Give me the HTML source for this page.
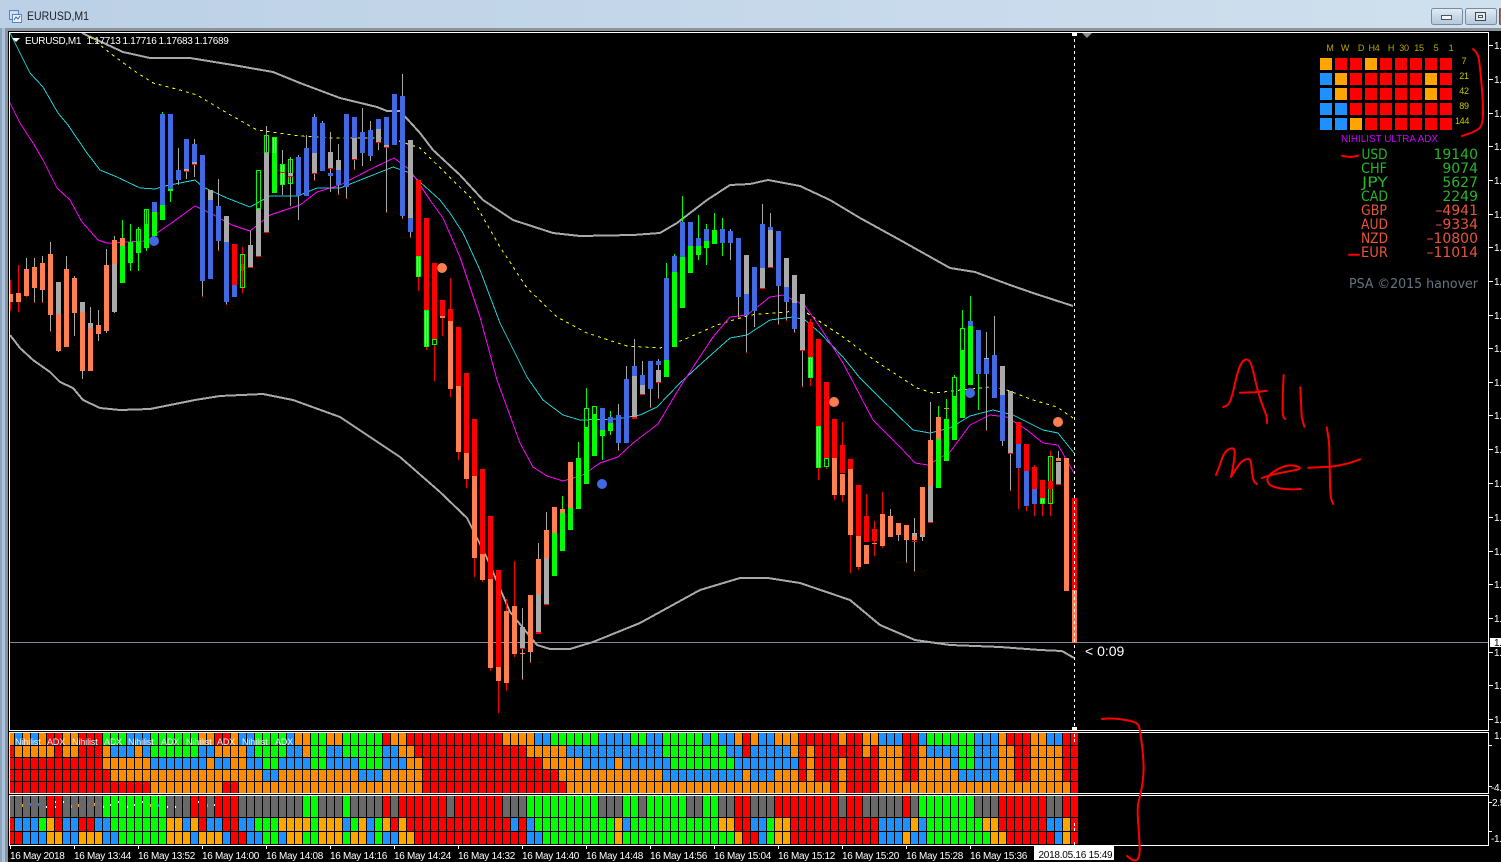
<!DOCTYPE html>
<html><head><meta charset="utf-8"><title>EURUSD,M1</title>
<style>
html,body{margin:0;padding:0;background:#000;width:1501px;height:862px;overflow:hidden}
svg{display:block;position:absolute;left:0;top:0}
text{font-family:"Liberation Sans",sans-serif}
.a{font-size:10px;letter-spacing:-.3px;fill:#fff}
.h{font-size:9px;fill:#b9a800;text-anchor:middle;letter-spacing:-.3px}
.c{font-family:"DejaVu Sans",sans-serif;font-size:14px}
.n{font-family:"DejaVu Sans",sans-serif;font-size:14px;text-anchor:end}
.g{fill:#2ab52a}.r{fill:#e8563a}
.t{font-size:9px;fill:#eef4ff;letter-spacing:-.1px}
.p{fill:none;stroke-linejoin:round}
</style></head><body>
<svg width="1501" height="862" viewBox="0 0 1501 862" xmlns="http://www.w3.org/2000/svg">
<defs>
<linearGradient id="tb" x1="0" y1="0" x2="1" y2="0"><stop offset="0" stop-color="#bcd0e6"/><stop offset="1" stop-color="#cfe0ee"/></linearGradient>
<linearGradient id="bt" x1="0" y1="0" x2="0" y2="1"><stop offset="0" stop-color="#e4edf5"/><stop offset=".5" stop-color="#c9d8e6"/><stop offset="1" stop-color="#b4c8da"/></linearGradient>
<clipPath id="cl"><rect x="10" y="33" width="1078" height="697"/></clipPath>
</defs>
<rect width="1501" height="862" fill="#000"/>
<!-- window chrome -->
<rect width="1501" height="28" fill="url(#tb)"/>
<rect x="0" y="28" width="7" height="834" fill="#a9c3df"/>
<rect x="0" y="28" width="2" height="834" fill="#8fa3b8"/>
<rect x="5" y="28" width="1496" height="3" fill="#8b939b"/>
<rect x="5" y="28" width="3" height="834" fill="#8b939b"/>
<!-- title icon -->
<rect x="9.5" y="10.5" width="9" height="9" fill="#cfe0f4" stroke="#5b84c4"/>
<rect x="12.5" y="14.5" width="9" height="8" fill="#eaf2fb" stroke="#5b84c4"/>
<path d="M14 20l2-3 2 2 2-3" fill="none" stroke="#3a66b0"/>
<text x="27" y="20" textLength="62" lengthAdjust="spacingAndGlyphs" style="font-size:12px;fill:#1a1f2a">EURUSD,M1</text>
<!-- buttons -->
<rect x="1431.5" y="8.5" width="31" height="16" rx="2" fill="url(#bt)" stroke="#7b8b9c"/>
<rect x="1441.5" y="15.5" width="10" height="4" fill="#f4f7fa" stroke="#4a5560"/>
<rect x="1465.5" y="8.5" width="31" height="16" rx="2" fill="url(#bt)" stroke="#7b8b9c"/>
<rect x="1475.5" y="12.5" width="10" height="8" fill="#dfe7ef" stroke="#3d4853"/>
<rect x="1478.5" y="15.5" width="4" height="2" fill="#f8fafc" stroke="#4a5560"/>
<rect x="1499.5" y="8.5" width="4" height="16" rx="1" fill="#c8584f" stroke="#7b4a48"/>

<g shape-rendering="crispEdges">
<!-- price line -->
<path d="M10 642.5H1488" stroke="#7d8c9a" fill="none"/>
<!-- indicator lines -->
<g clip-path="url(#cl)">
<polyline class="p" stroke="#a9a9a9" stroke-width="2" points="82,33 123,52 150,58 190,58 233,65 273,72 300,83 340,98 377,107 387,111 400,111 420,133 433,150 460,175 483,200 513,220 553,233 580,236 633,235 660,233 677,223 707,200 730,185 750,184 768,180 800,186 830,200 860,218 900,240 950,268 975,272 1010,285 1033,293 1073,306"/>
<polyline class="p" stroke="#a9a9a9" stroke-width="2" points="10,335 20,348 33,360 50,372 60,382 73,388 83,400 100,408 120,410 150,409 195,400 220,396 263,394 293,400 340,417 400,457 440,492 467,518 487,558 510,612 537,645 550,649 570,649 593,642 640,623 700,590 740,578 768,578 800,583 850,600 880,625 915,640 950,645 1000,647 1040,650 1062,651 1074,658"/>
<polyline class="p" stroke="#ffff00" stroke-dasharray="3 4" points="90,37 110,53 133,70 153,83 180,90 197,95 227,113 257,130 300,136 333,138 390,138 420,148 473,200 500,247 527,288 557,317 587,333 627,346 660,348 683,340 717,325 750,315 797,311 807,313 843,337 877,362 917,388 933,393 990,387 1007,390 1033,400 1057,407 1073,418"/>
<polyline class="p" stroke="#1fd0d6" points="10,33 30,73 43,87 58,113 68,125 87,153 100,170 117,177 140,188 155,189 165,186 180,183 195,180 203,187 227,198 250,207 270,196 298,196 317,188 340,188 373,175 393,167 410,173 440,200 450,213 463,233 480,270 500,323 527,377 543,400 563,415 580,420 617,419 640,415 657,407 680,383 703,362 730,338 747,335 770,320 793,317 805,320 820,333 843,357 860,378 880,398 913,430 930,433 950,428 970,416 993,410 1013,415 1043,430 1058,433 1074,453"/>
<polyline class="p" stroke="#ff00ff" points="10,103 20,123 33,143 43,160 57,188 70,200 82,222 98,240 107,243 147,241 157,233 173,222 195,206 210,213 232,225 250,231 270,215 300,205 317,192 340,185 373,168 394,158 410,170 430,200 443,218 460,257 480,317 497,380 520,443 533,467 547,476 563,481 583,475 600,463 618,457 633,443 658,424 680,387 713,337 730,317 747,315 770,297 783,295 798,302 805,306 820,327 843,363 873,420 900,447 915,463 928,465 950,452 970,425 990,415 1007,417 1027,430 1043,443 1058,445 1074,473"/>
<!-- wicks -->
<path fill="none" stroke="#a9a9a9" d="M26.5 258V297M34.5 258V303M42.5 256V303M50.5 242V332M58.5 282V352M66.5 256V347M74.5 276V336M82.5 302V379M90.5 307V371M98.5 310V341M106.5 249V333M114.5 236V313M178.5 148V185M186.5 139V179M194.5 139V177M202.5 281V297M218.5 179V251M226.5 302V305M250.5 231V268M266.5 126V232M282.5 150V195M290.5 157V206M298.5 155V220M306.5 135V196M314.5 114V181M322.5 121V171M330.5 132V192M338.5 144V195M346.5 114V199M354.5 159V170M362.5 108V166M370.5 121V161M378.5 142V150M386.5 145V213M402.5 74V219M410.5 232V238M522.5 608V680M530.5 652V663M538.5 543V559M546.5 512V530M618.5 404V451M626.5 366V379M634.5 339V419M642.5 361V395M650.5 389V408M658.5 359V399M730.5 229V260M738.5 297V318M746.5 315V353M754.5 311V327M762.5 204V224M770.5 213V227M778.5 286V325M786.5 302V321M794.5 329V333M802.5 350V387M890.5 509V516M898.5 535V541M906.5 540V563M914.5 518V572M922.5 535V541M930.5 402V440M986.5 332V431M994.5 316V355M1002.5 441V446M1010.5 453V491M1058.5 451V458"/>
<path fill="none" stroke="#ff0000" d="M10.5 280V311M18.5 265V312M242.5 247V293M418.5 277V291M426.5 347V350M434.5 344V381M442.5 318V336M450.5 278V309M450.5 389V397M458.5 452V460M466.5 479V488M474.5 558V577M482.5 580V582M490.5 668V671M498.5 681V713M506.5 599V611M506.5 683V691M514.5 561V606M514.5 654V657M810.5 319V322M810.5 378V386M818.5 468V480M826.5 466V469M834.5 495V500M842.5 422V445M842.5 495V502M850.5 535V573M858.5 567V570M866.5 494V516M874.5 521V556M882.5 492V514M882.5 546V548M1018.5 468V509M1026.5 506V511M1034.5 465V516M1042.5 504V516M1050.5 451V516M26.5 296V297M34.5 302V303M42.5 302V303M50.5 331V332M202.5 296V297M226.5 304V305M218.5 250V251M314.5 180V181M338.5 194V195M346.5 198V199M354.5 169V170M386.5 212V213M402.5 218V219M410.5 237V238M522.5 679V680M530.5 662V663M618.5 450V451M650.5 407V408M658.5 398V399M738.5 317V318M746.5 352V353M778.5 324V325M786.5 320V321M794.5 332V333M802.5 386V387M906.5 562V563M914.5 571V572M986.5 430V431M1010.5 490V491"/>
<path fill="none" stroke="#00ff00" d="M122.5 220V238M130.5 224V271M138.5 227V271M146.5 209V251M162.5 112V114M170.5 191V202M562.5 496V509M578.5 442V458M586.5 388V408M602.5 436V460M610.5 411V435M666.5 263V278M674.5 254V256M682.5 196V222M698.5 215V260M706.5 224V265M714.5 213V244M722.5 218V256M938.5 406V417M946.5 399V419M954.5 375V377M962.5 310V328M970.5 296V321M978.5 374V410"/>
<!-- bodies -->
<g fill="none" stroke-width="5">
<path stroke="#ff7f50" d="M10.5 294V302M18.5 293V302M26.5 269V296M34.5 267V288M42.5 263V290M50.5 254V315M58.5 314V351M66.5 269V347M74.5 278V313M82.5 312V371M90.5 328V371M98.5 325V334M106.5 265V331M114.5 240V264M122.5 238V246M442.5 316V318M450.5 321V389M458.5 386V452M466.5 453V479M474.5 476V558M482.5 554V580M490.5 579V668M498.5 667V681M506.5 611V683M514.5 606V654M530.5 595V652M538.5 559V594M546.5 530V558M554.5 507V533M562.5 509V513M570.5 462V508M522.5 653V654M834.5 458V495M842.5 474V495M850.5 469V535M858.5 536V567M866.5 545V564M874.5 543V544M882.5 514V546M890.5 516V537M898.5 523V535M906.5 525V540M914.5 536V540M922.5 487V535M930.5 440V486M938.5 417V439M946.5 408V409M1010.5 444V445M1058.5 458V461M1066.5 458V591M1074.5 590V643"/>
<path stroke="#a9a9a9" d="M58.5 282V314M82.5 302V312M90.5 323V328M114.5 264V312M186.5 169V171M194.5 162V164M210.5 190V200M226.5 216V242M250.5 245V267M258.5 208V256M266.5 152V232M290.5 173V176M314.5 153V173M330.5 152V168M338.5 160V170M354.5 138V159M378.5 129V142M386.5 145V147M410.5 140V218M522.5 627V648M538.5 594V632M546.5 558V604M634.5 376V417M642.5 385V394M658.5 370V382M746.5 255V294M762.5 268V288M770.5 230V267M786.5 258V287M794.5 275V303M802.5 294V350M914.5 533V536M922.5 535V537M930.5 486V522M986.5 358V359M1002.5 366V395M1010.5 391V453M1058.5 462V484"/>
<path stroke="#4169e1" d="M154.5 202V212M162.5 114V205M170.5 114V189M178.5 170V180M186.5 139V169M194.5 144V162M202.5 155V281M210.5 200V279M218.5 206V241M226.5 242V302M234.5 285V297M298.5 157V196M306.5 148V196M314.5 117V153M322.5 123V171M330.5 173V176M338.5 170V185M346.5 114V187M354.5 117V138M362.5 132V153M370.5 130V156M378.5 119V129M386.5 117V145M394.5 94V145M402.5 96V216M410.5 218V232M602.5 408V430M610.5 417V423M618.5 415V443M626.5 379V443M634.5 366V376M642.5 375V385M650.5 361V389M658.5 361V365M666.5 278V360M674.5 256V272M682.5 222V257M690.5 222V246M698.5 238V246M706.5 229V241M722.5 229V243M730.5 231V243M738.5 238V297M746.5 294V315M754.5 267V311M762.5 224V268M770.5 227V230M778.5 231V286M786.5 287V302M794.5 303V329M970.5 321V326M978.5 330V374M986.5 359V374M994.5 355V398M1002.5 395V441M1018.5 444V468M1026.5 471V506M1034.5 489V504"/>
<path stroke="#00ff00" d="M122.5 246V283M130.5 242V263M138.5 242V253M146.5 224V248M154.5 212V236M162.5 205V220M170.5 189V191M274.5 137V193M282.5 164V185M418.5 256V277M426.5 310V347M810.5 357V378M818.5 426V468M1042.5 498V504M554.5 533V576M562.5 513V551M570.5 508V530M578.5 458V509M586.5 427V484M594.5 415V456M602.5 430V436M610.5 423V431M666.5 360V377M674.5 272V347M682.5 257V308M690.5 246V273M698.5 246V255M706.5 241V248M714.5 230V244M938.5 439V488M946.5 419V461M954.5 396V440M962.5 350V418M970.5 326V385"/>
<path stroke="#ff0000" d="M234.5 244V285M242.5 264V271M186.5 171V172M194.5 164V165M250.5 267V268M258.5 256V257M266.5 232V233M314.5 173V174M330.5 168V169M354.5 159V160M378.5 142V143M386.5 147V148M418.5 180V256M426.5 218V310M434.5 263V339M442.5 300V316M450.5 309V321M458.5 327V386M466.5 373V453M474.5 419V476M482.5 469V554M490.5 516V579M498.5 570V667M522.5 648V649M538.5 632V634M546.5 604V605M634.5 417V419M642.5 394V395M658.5 382V383M762.5 288V289M770.5 267V268M802.5 350V351M810.5 322V357M818.5 339V426M826.5 382V458M834.5 419V458M842.5 445V473M850.5 459V469M858.5 485V536M866.5 516V542M874.5 529V541M914.5 541V542M930.5 522V523M1010.5 453V454M1018.5 422V444M1026.5 444V471M1034.5 467V489M1042.5 480V498M1050.5 481V489M1058.5 484V485M1074.5 498V590"/>
</g>
<!-- white stripes -->
<path fill="none" stroke="#fff" d="M273.5 138V153M275.5 138V153M281.5 165V184M283.5 165V184M417.5 257V276M419.5 257V276M425.5 311V346M427.5 311V346M809.5 358V377M811.5 358V377M817.5 427V467M819.5 427V467M1041.5 499V503M1043.5 499V503"/>
<path fill="none" stroke="#ff0000" stroke-width="5" d="M282.5 172V173"/>
<!-- outline candles -->
<path fill="none" stroke="#00ff00" d="M136.5 229.5h4v13h-4zM144.5 209.5h4v15h-4zM240.5 254.5h4v33h-4zM256.5 170.5h4v38h-4zM264.5 135.5h4v17h-4zM288.5 159.5h4v24h-4zM432.5 339.5h4v5h-4zM584.5 408.5h4v19h-4zM592.5 406.5h4v8h-4zM824.5 458.5h4v8h-4zM952.5 377.5h4v19h-4zM960.5 328.5h4v22h-4zM1048.5 456.5h4v47h-4z"/>
<path fill="none" stroke="#a9a9a9" stroke-width="5" d="M290.5 173V176"/>
<path fill="none" stroke="#ff0000" stroke-width="5" d="M290.5 176V177M1050.5 481V489"/>
</g>
<!-- dashed cursor -->
<path d="M1074.5 33V730" stroke="#fff" stroke-dasharray="3 3" fill="none"/>
<rect x="1072" y="33" width="5" height="3" fill="#fff"/>
<rect x="1072" y="727" width="5" height="3" fill="#fff"/>
<!-- indicator grid panel 2 -->
<g fill="none" stroke-width="12">
<path stroke="#ff0000" d="M46 739H62M78 739H102M214 739H230M382 739H390M406 739H502M742 739H750M798 739H838M846 739H862M902 739H918M1006 739H1030M1062 739H1078"/>
<path stroke="#ff8c00" d="M10 739H14M22 739H30M38 739H46M62 739H78M198 739H214M230 739H238M294 739H310M326 739H342M390 739H406M502 739H534M734 739H742M750 739H758M774 739H798M838 739H846M862 739H878M998 739H1006M1030 739H1046"/>
<path stroke="#1e90ff" d="M14 739H22M30 739H38M126 739H150M238 739H254M286 739H294M534 739H550M598 739H630M646 739H662M702 739H710M718 739H734M758 739H774M878 739H902M918 739H926M974 739H998M1046 739H1062"/>
<path stroke="#00ff00" d="M102 739H126M150 739H198M254 739H286M310 739H326M342 739H382M550 739H598M630 739H646M662 739H702M710 739H718M926 739H974"/>
</g>
<g fill="none" stroke-width="11">
<path stroke="#ff0000" d="M10 751.5H14M54 751.5H62M78 751.5H102M414 751.5H526M742 751.5H750M798 751.5H806M814 751.5H862M870 751.5H878M902 751.5H918M1014 751.5H1030M1062 751.5H1078"/>
<path stroke="#ff8c00" d="M14 751.5H54M62 751.5H78M102 751.5H110M134 751.5H142M214 751.5H246M302 751.5H310M398 751.5H414M526 751.5H566M790 751.5H798M806 751.5H814M862 751.5H870M878 751.5H902M918 751.5H926M998 751.5H1014M1030 751.5H1062"/>
<path stroke="#1e90ff" d="M110 751.5H134M142 751.5H150M198 751.5H214M246 751.5H254M286 751.5H302M326 751.5H342M382 751.5H398M566 751.5H662M726 751.5H742M750 751.5H790M926 751.5H958M974 751.5H998"/>
<path stroke="#00ff00" d="M150 751.5H198M254 751.5H286M310 751.5H326M342 751.5H382M662 751.5H726M958 751.5H974"/>

<path stroke="#ff0000" d="M10 763.5H102M422 763.5H542M798 763.5H806M814 763.5H838M846 763.5H878M902 763.5H918M1014 763.5H1030M1062 763.5H1078"/>
<path stroke="#ff8c00" d="M102 763.5H150M206 763.5H214M230 763.5H246M406 763.5H422M542 763.5H582M614 763.5H622M806 763.5H814M838 763.5H846M878 763.5H902M918 763.5H950M998 763.5H1014M1030 763.5H1062"/>
<path stroke="#1e90ff" d="M150 763.5H206M214 763.5H230M246 763.5H262M278 763.5H310M326 763.5H358M382 763.5H406M582 763.5H614M622 763.5H670M734 763.5H798M950 763.5H958M974 763.5H998"/>
<path stroke="#00ff00" d="M262 763.5H278M310 763.5H326M358 763.5H382M670 763.5H734M958 763.5H974"/>

<path stroke="#ff0000" d="M10 775.5H110M422 775.5H558M798 775.5H806M814 775.5H838M846 775.5H878M902 775.5H918M1014 775.5H1030M1062 775.5H1078"/>
<path stroke="#ff8c00" d="M110 775.5H262M278 775.5H358M382 775.5H422M558 775.5H662M742 775.5H750M774 775.5H798M806 775.5H814M838 775.5H846M878 775.5H902M918 775.5H958M998 775.5H1014M1030 775.5H1062"/>
<path stroke="#1e90ff" d="M262 775.5H278M358 775.5H382M662 775.5H742M750 775.5H774M958 775.5H998"/>

<path stroke="#ff0000" d="M10 787.5H150M222 787.5H238M422 787.5H566M830 787.5H838M846 787.5H878M1070 787.5H1078"/>
<path stroke="#ff8c00" d="M150 787.5H222M238 787.5H422M566 787.5H830M838 787.5H846M878 787.5H1070"/>
</g>
<!-- panel 3 -->
<g fill="none" stroke-width="21">
<path stroke="#696969" d="M10 806.5H46M62 806.5H102M166 806.5H190M206 806.5H214M238 806.5H302M318 806.5H342M350 806.5H382M390 806.5H398M446 806.5H454M502 806.5H526M598 806.5H622M638 806.5H646M686 806.5H702M718 806.5H734M750 806.5H774M838 806.5H846M862 806.5H902M910 806.5H918M974 806.5H998M1046 806.5H1062"/>
<path stroke="#ff0000" d="M46 806.5H62M190 806.5H206M214 806.5H238M382 806.5H390M398 806.5H446M454 806.5H502M734 806.5H750M774 806.5H838M846 806.5H862M902 806.5H910M998 806.5H1046M1062 806.5H1078"/>
<path stroke="#00ff00" d="M102 806.5H166M302 806.5H318M342 806.5H350M526 806.5H598M622 806.5H638M646 806.5H686M702 806.5H718M918 806.5H974"/>
</g>
<g fill="none" stroke-width="13">
<path stroke="#ff0000" d="M10 824.5H14M54 824.5H62M78 824.5H94M198 824.5H206M222 824.5H238M390 824.5H398M406 824.5H510M518 824.5H526M734 824.5H750M790 824.5H878M998 824.5H1046M1070 824.5H1078"/>
<path stroke="#ffa500" d="M46 824.5H54M166 824.5H182M190 824.5H198M278 824.5H310M318 824.5H342M358 824.5H366M382 824.5H390M398 824.5H406M614 824.5H622M718 824.5H734M774 824.5H790M910 824.5H918M982 824.5H998M1062 824.5H1070"/>
<path stroke="#1e90ff" d="M14 824.5H38M62 824.5H78M94 824.5H110M182 824.5H190M206 824.5H222M238 824.5H254M342 824.5H350M366 824.5H374M510 824.5H518M526 824.5H534M622 824.5H630M750 824.5H766M878 824.5H910M918 824.5H926M1046 824.5H1062"/>
<path stroke="#00ff00" d="M38 824.5H46M110 824.5H166M254 824.5H278M310 824.5H318M350 824.5H358M374 824.5H382M534 824.5H614M630 824.5H718M766 824.5H774M926 824.5H982"/>
</g>
<g fill="none" stroke-width="12">
<path stroke="#ff0000" d="M10 838H22M230 838H246M414 838H526M742 838H758M790 838H878M1006 838H1054M1070 838H1078"/>
<path stroke="#ffa500" d="M46 838H62M78 838H102M166 838H190M198 838H222M286 838H302M318 838H342M350 838H366M398 838H414M614 838H622M734 838H742M774 838H790M902 838H910M990 838H1006M1062 838H1070"/>
<path stroke="#1e90ff" d="M22 838H46M62 838H78M102 838H118M190 838H198M222 838H230M246 838H262M278 838H286M366 838H374M382 838H398M526 838H542M758 838H766M878 838H902M910 838H926M1054 838H1062"/>
<path stroke="#00ff00" d="M118 838H166M262 838H278M302 838H318M342 838H350M374 838H382M542 838H614M622 838H734M766 838H774M926 838H990"/>
</g>
<!-- grid lines -->
<path stroke="#000" fill="none" d="M14.5 733
v112m8-112v112m8-112v112m8-112v112m8-112v112m8-112v112m8-112v112m8-112v112m8-112v112m8-112v112m8-112
v112m8-112v112m8-112v112m8-112v112m8-112v112m8-112v112m8-112v112m8-112v112m8-112v112m8-112v112m8-112
v112m8-112v112m8-112v112m8-112v112m8-112v112m8-112v112m8-112v112m8-112v112m8-112v112m8-112v112m8-112
v112m8-112v112m8-112v112m8-112v112m8-112v112m8-112v112m8-112v112m8-112v112m8-112v112m8-112v112m8-112
v112m8-112v112m8-112v112m8-112v112m8-112v112m8-112v112m8-112v112m8-112v112m8-112v112m8-112v112m8-112
v112m8-112v112m8-112v112m8-112v112m8-112v112m8-112v112m8-112v112m8-112v112m8-112v112m8-112v112m8-112
v112m8-112v112m8-112v112m8-112v112m8-112v112m8-112v112m8-112v112m8-112v112m8-112v112m8-112v112m8-112
v112m8-112v112m8-112v112m8-112v112m8-112v112m8-112v112m8-112v112m8-112v112m8-112v112m8-112v112m8-112
v112m8-112v112m8-112v112m8-112v112m8-112v112m8-112v112m8-112v112m8-112v112m8-112v112m8-112v112m8-112
v112m8-112v112m8-112v112m8-112v112m8-112v112m8-112v112m8-112v112m8-112v112m8-112v112m8-112v112m8-112
v112m8-112v112m8-112v112m8-112v112m8-112v112m8-112v112m8-112v112m8-112v112m8-112v112m8-112v112m8-112
v112m8-112v112m8-112v112m8-112v112m8-112v112m8-112v112m8-112v112m8-112v112m8-112v112m8-112v112m8-112
v112m8-112v112m8-112v112m8-112v112m8-112v112m8-112v112m8-112v112m8-112v112m8-112v112m8-112v112m8-112
v112m8-112v112m8-112v112"/>
<path stroke="#000" fill="none" d="M10 745.5H1078M10 757.5H1078M10 769.5H1078M10 781.5H1078M10 817.5H1078M10 831.5H1078"/>
<path d="M1074.5 734V737M1074.5 739V742M1074.5 823V826M1074.5 828V831M1074.5 842V845" stroke="#fff" fill="none"/>
<!-- marks in panel 3 -->
<path fill="none" stroke="#ff9a30" d="M22.5 804v3M71.5 805v3M78.5 804v3M94.5 803v3M150.5 804v3M207.5 804v3"/>
<path fill="none" stroke="#3a7fd0" d="M30.5 803v3M38.5 803v3M87.5 804v3M158.5 804v3M183.5 804v3"/>
<path fill="none" stroke="#fff" d="M46.5 806v2M55.5 801v2M55.5 806v2M63.5 801v2M103.5 806v2M110.5 804v2M118.5 801v2M127.5 806v2M134.5 804v2M142.5 801v2M167.5 806v2M175.5 806v2M198.5 801v2M214.5 804v2"/>
<!-- frames -->
<g fill="none" stroke="#fff">
<rect x="9.5" y="32.5" width="1479" height="698"/>
<rect x="9.5" y="732.5" width="1479" height="61"/>
<rect x="9.5" y="795.5" width="1479" height="50"/>
<!-- ticks -->
<path d="M1489 45.5h4M1489 79.5h4M1489 113.5h4M1489 146.5h4M1489 180.5h4M1489 214.5h4M1489 247.5h4M1489 281.5h4M1489 315.5h4M1489 348.5h4M1489 382.5h4M1489 415.5h4M1489 449.5h4M1489 483.5h4M1489 517.5h4M1489 551.5h4M1489 584.5h4M1489 618.5h4M1489 652.5h4M1489 685.5h4M1489 719.5h4M1489 745.5h3M1489 786.5h3M1489 802.5h3M1489 831.5h3"/>
<path d="M10.5 846v3M74.5 846v3M138.5 846v3M202.5 846v3M266.5 846v3M330.5 846v3M394.5 846v3M458.5 846v3M522.5 846v3M586.5 846v3M650.5 846v3M714.5 846v3M778.5 846v3M842.5 846v3M906.5 846v3M970.5 846v3M1034.5 846v3"/>
</g>
<!-- matrix -->
<path fill="#ffa500" d="M1320 58h12v12h-12zM1365 58h12v12h-12zM1335 73h12v12h-12zM1425 73h12v12h-12zM1335 88h12v12h-12zM1425 88h12v12h-12zM1350 118h12v12h-12z"/>
<path fill="#1e90ff" d="M1320 73h12v12h-12zM1320 88h12v12h-12zM1320 103h12v12h-12zM1335 103h12v12h-12zM1320 118h12v12h-12zM1335 118h12v12h-12z"/>
<path fill="#ff0000" d="M1335 58h12v12h-12zM1350 58h12v12h-12zM1380 58h12v12h-12zM1395 58h12v12h-12zM1410 58h12v12h-12zM1425 58h12v12h-12zM1440 58h12v12h-12zM1350 73h12v12h-12zM1365 73h12v12h-12zM1380 73h12v12h-12zM1395 73h12v12h-12zM1410 73h12v12h-12zM1440 73h12v12h-12zM1350 88h12v12h-12zM1365 88h12v12h-12zM1380 88h12v12h-12zM1395 88h12v12h-12zM1410 88h12v12h-12zM1440 88h12v12h-12zM1350 103h12v12h-12zM1365 103h12v12h-12zM1380 103h12v12h-12zM1395 103h12v12h-12zM1410 103h12v12h-12zM1425 103h12v12h-12zM1440 103h12v12h-12zM1365 118h12v12h-12zM1380 118h12v12h-12zM1395 118h12v12h-12zM1410 118h12v12h-12zM1425 118h12v12h-12zM1440 118h12v12h-12z"/>
</g>
<!-- dots -->
<circle cx="154" cy="241" r="5" fill="#4169e1"/>
<circle cx="442" cy="268" r="5" fill="#ff7f50"/>
<circle cx="602" cy="484" r="5" fill="#4169e1"/>
<circle cx="834" cy="402" r="5" fill="#ff7f50"/>
<circle cx="970" cy="393" r="5" fill="#4169e1"/>
<circle cx="1058" cy="422" r="5" fill="#ff7f50"/>
<!-- header -->
<path d="M12 38h8l-4 4z" fill="#fff"/>
<path d="M1082 33h10l-5 5z" fill="#8a8f94"/>
<text class="a" x="25" y="44">EURUSD,M1</text>
<text class="a" x="86.5" y="44">1.17713</text>
<text class="a" x="122.5" y="44">1.17716</text>
<text class="a" x="158.5" y="44">1.17683</text>
<text class="a" x="194.5" y="44">1.17689</text>
<!-- grid overlay text -->
<text class="t" x="15" y="745">Nihilist</text><text class="t" x="47" y="745">ADX</text>
<text class="t" x="72" y="745">Nihilist</text><text class="t" x="104" y="745">ADX</text>
<text class="t" x="128" y="745">Nihilist</text><text class="t" x="161" y="745">ADX</text>
<text class="t" x="186" y="745">Nihilist</text><text class="t" x="217" y="745">ADX</text>
<text class="t" x="242" y="745">Nihilist</text><text class="t" x="275" y="745">ADX</text>
<!-- time axis -->
<text class="a" x="10" y="859">16 May 2018</text>
<text class="a" x="74" y="859">16 May 13:44</text>
<text class="a" x="138" y="859">16 May 13:52</text>
<text class="a" x="202" y="859">16 May 14:00</text>
<text class="a" x="266" y="859">16 May 14:08</text>
<text class="a" x="330" y="859">16 May 14:16</text>
<text class="a" x="394" y="859">16 May 14:24</text>
<text class="a" x="458" y="859">16 May 14:32</text>
<text class="a" x="522" y="859">16 May 14:40</text>
<text class="a" x="586" y="859">16 May 14:48</text>
<text class="a" x="650" y="859">16 May 14:56</text>
<text class="a" x="714" y="859">16 May 15:04</text>
<text class="a" x="778" y="859">16 May 15:12</text>
<text class="a" x="842" y="859">16 May 15:20</text>
<text class="a" x="906" y="859">16 May 15:28</text>
<text class="a" x="970" y="859">16 May 15:36</text>
<rect x="1034" y="846" width="80" height="14" fill="#fff"/>
<text x="1038.5" y="858" style="font-size:10px;letter-spacing:-.25px;fill:#000">2018.05.16 15:49</text>
<!-- price axis -->
<g style="letter-spacing:-.6px">
<text class="a" x="1494" y="49">1.18100</text>
<text class="a" x="1494" y="83">1.18080</text>
<text class="a" x="1494" y="117">1.18060</text>
<text class="a" x="1494" y="150">1.18040</text>
<text class="a" x="1494" y="184">1.18020</text>
<text class="a" x="1494" y="218">1.18000</text>
<text class="a" x="1494" y="251">1.17980</text>
<text class="a" x="1494" y="285">1.17960</text>
<text class="a" x="1494" y="319">1.17940</text>
<text class="a" x="1494" y="352">1.17920</text>
<text class="a" x="1494" y="386">1.17900</text>
<text class="a" x="1494" y="419">1.17880</text>
<text class="a" x="1494" y="453">1.17860</text>
<text class="a" x="1494" y="487">1.17840</text>
<text class="a" x="1494" y="521">1.17820</text>
<text class="a" x="1494" y="555">1.17800</text>
<text class="a" x="1494" y="588">1.17780</text>
<text class="a" x="1494" y="622">1.17760</text>
<text class="a" x="1494" y="656">1.17740</text>
<text class="a" x="1494" y="689">1.17720</text>
<text class="a" x="1494" y="723">1.17700</text>
<text class="a" x="1494" y="739">1.00</text>
<text class="a" x="1491" y="791">-4.00</text>
<text class="a" x="1492" y="806">2.50</text>
<text class="a" x="1491" y="842">-1.00</text>
</g>
<rect x="1490" y="638" width="11" height="9" fill="#fff"/>
<text x="1494" y="646" style="font-size:10px;letter-spacing:-.6px;fill:#000">1.17689</text>
<text x="1085" y="656" style="font-size:14px;fill:#fff">&lt; 0:09</text>
<!-- panel text -->
<text class="h" x="1330" y="51">M</text>
<text class="h" x="1345" y="51">W</text>
<text class="h" x="1361" y="51">D</text>
<text class="h" x="1374" y="51">H4</text>
<text class="h" x="1391" y="51">H</text>
<text class="h" x="1404" y="51">30</text>
<text class="h" x="1419" y="51">15</text>
<text class="h" x="1436" y="51">5</text>
<text class="h" x="1451" y="51">1</text>
<text class="h" x="1464" y="64" style="fill:#c8c800">7</text>
<text class="h" x="1464" y="79" style="fill:#c8c800">21</text>
<text class="h" x="1464" y="94" style="fill:#c8c800">42</text>
<text class="h" x="1464" y="109" style="fill:#c8c800">89</text>
<text class="h" x="1462" y="124" style="fill:#c8c800">144</text>
<text x="1341" y="142" textLength="97" lengthAdjust="spacingAndGlyphs" style="font-size:10px;fill:#cc00ff">NIHILIST ULTRA ADX</text>
<text class="c g" x="1361.5" y="159" textLength="26" lengthAdjust="spacingAndGlyphs">USD</text><text class="n g" x="1478" y="159">19140</text>
<text class="c g" x="1361" y="173" textLength="26" lengthAdjust="spacingAndGlyphs">CHF</text><text class="n g" x="1478" y="173">9074</text>
<text class="c g" x="1362" y="187" textLength="26" lengthAdjust="spacingAndGlyphs">JPY</text><text class="n g" x="1478" y="187">5627</text>
<text class="c g" x="1361" y="201" textLength="27" lengthAdjust="spacingAndGlyphs">CAD</text><text class="n g" x="1478" y="201">2249</text>
<text class="c r" x="1361" y="215" textLength="26" lengthAdjust="spacingAndGlyphs">GBP</text><text class="n r" x="1478" y="215">–4941</text>
<text class="c r" x="1361" y="229" textLength="27" lengthAdjust="spacingAndGlyphs">AUD</text><text class="n r" x="1478" y="229">–9334</text>
<text class="c r" x="1361" y="243" textLength="27" lengthAdjust="spacingAndGlyphs">NZD</text><text class="n r" x="1478" y="243">–10800</text>
<text class="c r" x="1361" y="257" textLength="27" lengthAdjust="spacingAndGlyphs">EUR</text><text class="n r" x="1478" y="257">–11014</text>
<text x="1349" y="288" textLength="129" lengthAdjust="spacingAndGlyphs" style="font-family:'DejaVu Sans',sans-serif;font-size:13px;fill:#667482">PSA ©2015 hanover</text>
<!-- hand-drawn red annotations -->
<g fill="none" stroke="#f00" stroke-width="2" stroke-linecap="round" stroke-linejoin="round">
<path d="M1473 49Q1478 53 1479 60Q1480 67 1481.5 83.5Q1483 100 1483 111.5Q1483 123 1480.5 127Q1478 131 1462 136"/>
<path d="M1342 155.7Q1350 158 1358 155.7"/>
<path d="M1349 254.7H1359"/>
<path d="M1223 407Q1228 406 1230 401.5Q1232 397 1235 383.5Q1238 370 1240.5 365Q1243 360 1245.5 359.5Q1248 359 1250 362Q1252 365 1255 379Q1258 393 1261.5 402.5Q1265 412 1266 414.5Q1267 417 1267 423"/>
<path d="M1240 392.7L1255 392.3L1266.7 390.7"/>
<path d="M1283.7 375Q1282.3 400 1282.7 412Q1283 418 1285.3 419"/>
<path d="M1300.3 387.3L1301.7 416.7L1304.3 426.7"/>
<path d="M1216 475Q1219 468 1221 461.5Q1223 455 1225.5 452Q1228 449 1231 448.5Q1234 448 1234.5 450.5Q1235 453 1234 460.5Q1233 468 1231 477Q1238 465 1241.5 462Q1245 459 1248 459Q1251 459 1251.5 466Q1252 473 1253 478Q1254 483 1257 484"/>
<path d="M1262 478Q1270 475 1280 473Q1290 471 1296 470Q1302 469 1298.5 467Q1295 465 1289 465.5Q1283 466 1275.5 470.5Q1268 475 1267.5 478.5Q1267 482 1269.5 484.5Q1272 487 1281 488.5Q1290 490 1301 489"/>
<path d="M1326.7 427.3Q1329 440 1329.3 446.7L1330 483.3Q1330.2 500 1333.3 504"/>
<path d="M1308.3 467.7L1330 466.7Q1346 465 1360 459.3"/>
<path d="M1102 719Q1110 718 1118.5 719Q1127 720 1132.5 721.5Q1138 723 1139 726.5Q1140 730 1141.5 741.5Q1143 753 1143.5 763Q1144 773 1142.5 783Q1141 793 1139 800Q1137 807 1138 820Q1139 833 1139.5 843Q1140 853 1139 856.5Q1138 860 1135.5 860.5Q1133 861 1127 856"/>
</g>
</svg>
</body></html>
